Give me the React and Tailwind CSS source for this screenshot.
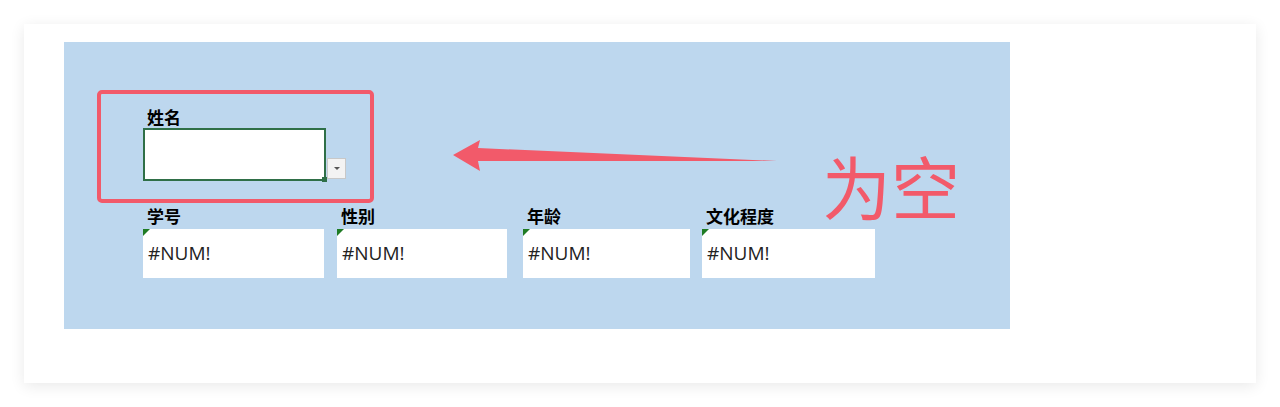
import React from "react";

const CELLS = [
  { label: "学号", w: "w-[181px]" },
  { label: "性别", w: "w-[170px]" },
  { label: "年龄", w: "w-[167px]" },
  { label: "文化程度", w: "w-[173px]" },
];
const GAPS = ["mr-[13px]", "mr-[16px]", "mr-[12px]", ""];

const cjk = { fontFamily: '"Microsoft YaHei", "Noto Sans CJK SC", sans-serif' };

function Cell({ label, w, gap }) {
  return (
    <div className={`${w} ${gap} flex flex-col`}>
      <div className="h-[26px] pl-[4px] pt-[2px] text-[17px] font-bold leading-[21px] text-black" style={cjk}>
        {label}
      </div>
      <div className="relative h-[49px] bg-white">
        <div className="absolute left-0 top-0 h-0 w-0 border-r-[7px] border-t-[7px] border-r-transparent border-t-[#1e7b24]" />
        <div className="pl-[5px] pt-[12px] text-[19px] leading-[24px] text-[#222]" style={{ fontFamily: '"Open Sans", "Noto Sans", sans-serif' }}>
          #NUM!
        </div>
      </div>
    </div>
  );
}

export default function App() {
  return (
    <div className="h-[407px] w-[1280px] bg-white p-[24px]">
      <div className="h-[359px] w-[1232px] bg-white pl-[40px] pt-[18px] shadow-[0_3px_14px_rgba(0,0,0,0.09)]">
        <div className="relative h-[287px] w-[946px] bg-[#bdd7ee] pl-[33px] pt-[48px]">
          <div className="h-[113px] w-[277px] rounded-[5px] border-[4px] border-[#f25a6a] pl-[42px] pt-[12px]">
            <div className="pl-[4px] text-[17px] font-bold leading-[22px] text-black" style={cjk}>
              姓名
            </div>
            <div className="flex items-end">
              <div className="relative h-[53px] w-[183px] border-2 border-[#2f6f47] bg-white">
                <div className="absolute bottom-[-3px] right-[-3px] h-[5px] w-[5px] bg-[#2f6f47]" />
              </div>
              <div className="mb-[2px] ml-[1px] flex h-[21px] w-[19px] items-center justify-center border border-[#c8c8c8] bg-[#f3f3f3]">
                <div className="h-0 w-0 border-x-[3px] border-t-[3px] border-x-transparent border-t-[#555]" />
              </div>
            </div>
          </div>
          <div className="ml-[46px] flex">
            {CELLS.map((c, i) => (
              <Cell key={c.label} label={c.label} w={c.w} gap={GAPS[i]} />
            ))}
          </div>

          <svg className="absolute left-[386px] top-[95px]" width="340" height="40" viewBox="0 0 340 40">
            <polygon points="3,18 30,3 28,11 327,24 28,24 30,34" fill="#f25a6a" />
          </svg>
          <div className="absolute left-[758px] top-[101px] text-[69px] leading-[84px] text-[#f25a6a]" style={{ fontFamily: '"Noto Sans CJK SC", sans-serif' }}>
            为空
          </div>
        </div>
      </div>
    </div>
  );
}
